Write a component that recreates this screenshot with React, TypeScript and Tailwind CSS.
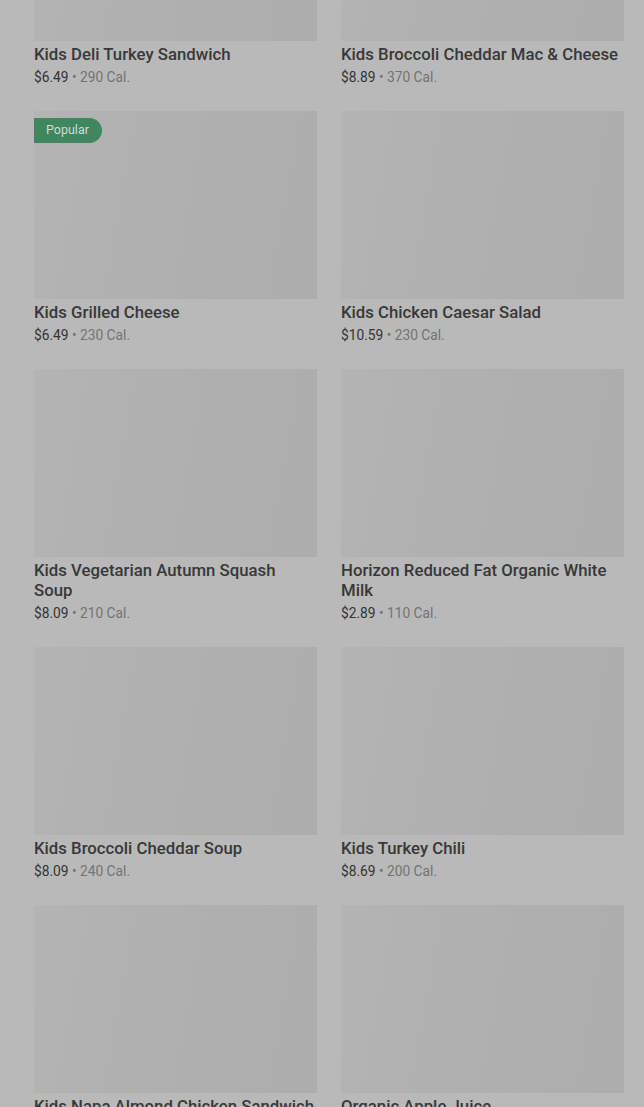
const items = [
  { name: "Kids Deli Turkey Sandwich", price: "$6.49", cal: "290 Cal." },
  { name: "Kids Broccoli Cheddar Mac & Cheese", price: "$8.89", cal: "370 Cal." },
  { name: "Kids Grilled Cheese", price: "$6.49", cal: "230 Cal.", popular: true },
  { name: "Kids Chicken Caesar Salad", price: "$10.59", cal: "230 Cal." },
  { name: "Kids Vegetarian Autumn Squash Soup", price: "$8.09", cal: "210 Cal." },
  { name: "Horizon Reduced Fat Organic White Milk", price: "$2.89", cal: "110 Cal." },
  { name: "Kids Broccoli Cheddar Soup", price: "$8.09", cal: "240 Cal." },
  { name: "Kids Turkey Chili", price: "$8.69", cal: "200 Cal." },
  { name: "Kids Napa Almond Chicken Sandwich", price: "$8.09", cal: "420 Cal." },
  { name: "Organic Apple Juice", price: "$2.89", cal: "120 Cal." },
];

type Item = (typeof items)[number];

const MenuCard = ({ item }: { item: Item }) => {
  return (
    <div className="flex flex-col">
      <div className="relative h-[188px] w-full bg-[linear-gradient(100deg,#b4b4b4_0%,#b0b0b0_40%,#adadad_100%)]">
        {item.popular && (
          <div className="absolute left-0 top-[7px] flex h-[25px] items-center rounded-r-full bg-[#3f875f] pl-3 pr-[13px] text-[12.5px] text-[#cfdcd3]">
            Popular
          </div>
        )}
      </div>
      <div className="mt-[3px] text-[16.75px] leading-5 font-medium text-[#383838]">
        {item.name}
      </div>
      <div className="mt-1 text-[13.75px] leading-[18px]">
        <span className="text-[#333333]">{item.price}</span>
        <span className="text-[#737373]"> • {item.cal}</span>
      </div>
    </div>
  );
};

export default function App() {
  return (
    <div className="h-[1107px] overflow-hidden bg-[#b9b9b9] font-['Roboto',sans-serif]">
      <div className="mt-[-147px] grid grid-cols-2 gap-x-6 gap-y-[25px] pl-[34px] pr-5">
        {items.map((item) => (
          <MenuCard key={item.name} item={item} />
        ))}
      </div>
    </div>
  );
}
